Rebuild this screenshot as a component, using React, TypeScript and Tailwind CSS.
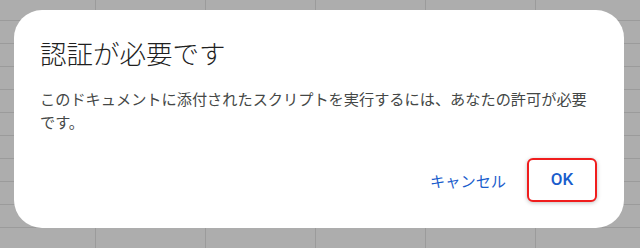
import React from "react";

const rows = Array.from({ length: 12 });
const cols = Array.from({ length: 7 });

export default function App() {
  return (
    <div className="relative h-[248px] w-[640px] overflow-hidden bg-[#adadad]">
      {/* dimmed sheet behind the dialog */}
      <div className="-ml-[14px] -mt-[2px] grid grid-cols-[repeat(7,110px)] auto-rows-[23px]">
        {rows.map((_, r) =>
          cols.map((_, c) => (
            <div key={`${r}-${c}`} className="border-b border-r border-[#9b9b9b]" />
          ))
        )}
      </div>

      <div
        role="dialog"
        className="absolute left-[14px] top-[10px] flex h-[218px] w-[610px] flex-col rounded-[28px] bg-white pl-[26px] pr-[27px] pt-[27px] pb-[26px]"
        style={{ fontFamily: '"Noto Sans CJK JP", "Noto Sans", sans-serif' }}
      >
        <h2 className="text-[26.5px] leading-[32px] font-light text-[#1f1f1f]">認証が必要です</h2>
        <p className="mt-[18px] max-w-[556px] text-[15.2px] leading-[23px] text-[#444746]">
          このドキュメントに添付されたスクリプトを実行するには、あなたの許可が必要です。
        </p>
        <div className="mt-auto flex items-center justify-end gap-[9px]">
          <button type="button" className="h-[40px] px-[12px] text-[15.2px] text-[#1a5dcc]">
            キャンセル
          </button>
          <button
            type="button"
            className="flex h-[44px] w-[70px] items-center justify-center rounded-[6px] border-2 border-[#f01d1d] bg-white text-[17px] font-medium text-[#1a5dcc] shadow-[0_1px_4px_rgba(0,0,0,0.25)]"
            style={{ fontFamily: 'Roboto, "Noto Sans CJK JP", sans-serif' }}
          >
            OK
          </button>
        </div>
      </div>
    </div>
  );
}
